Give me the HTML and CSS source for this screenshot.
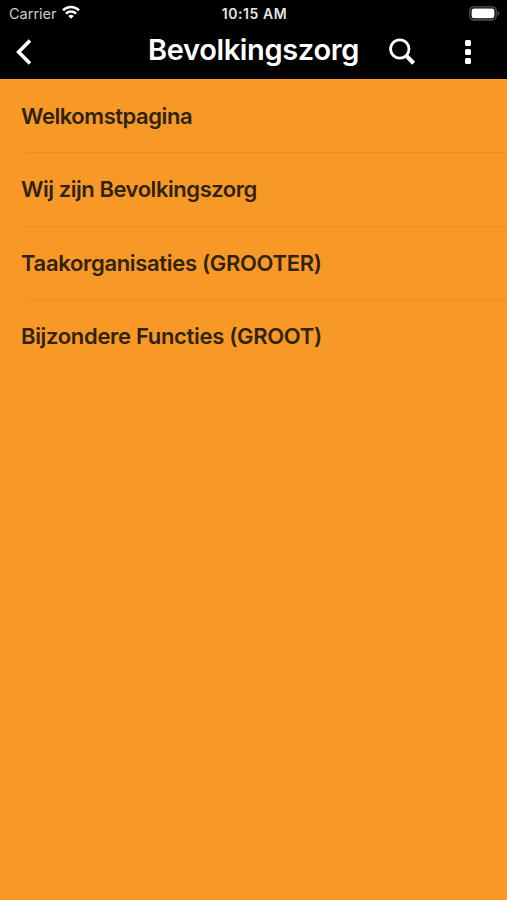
FILE: index.html
```html
<!DOCTYPE html>
<html lang="nl">

<head>
    <meta charset="UTF-8">
    <meta name="viewport" content="width=device-width, initial-scale=1.0">
    <title>Bevolkingszorg</title>
    <link rel="stylesheet" href="styles.css">
</head>

<body>
    <header class="header">
        <!-- Statusbalk -->
        <div class="statusbar">
            <div class="statusbar__left">
                <span class="statusbar__carrier">Carrier</span>
                <svg class="wifi" width="18" height="14" viewBox="0 0 18 14">
                    <g fill="none" stroke="#fff" stroke-width="2.4">
                        <path d="M1 5.3a11.3 11.3 0 0 1 16 0" />
                        <path d="M3.9 8.6a7.2 7.2 0 0 1 10.2 0" />
                    </g>
                    <path d="M9 13.8L6.2 11a4 4 0 0 1 5.6 0z" fill="#fff" />
                </svg>
            </div>
            <span class="statusbar__time">10:15 AM</span>
            <div class="statusbar__right">
                <svg class="battery" width="31" height="15" viewBox="0 0 31 15">
                    <rect x="0.8" y="0.8" width="26.4" height="13.2" rx="4" fill="none" stroke="#555" stroke-width="1.3" />
                    <rect x="2.6" y="2.6" width="22.8" height="9.6" rx="2.2" fill="#fff" />
                    <path d="M28.6 5.2c2.2.9 2.2 3.5 0 4.4z" fill="#555" />
                </svg>
            </div>
        </div>

        <!-- Navigatie -->
        <nav class="navbar">
            <a class="navbar__back" href="#" aria-label="Terug">
                <svg width="18" height="28" viewBox="0 0 18 28">
                    <path d="M15 2.4L3.6 14 15 25.6" fill="none" stroke="#fff" stroke-width="3.6" />
                </svg>
            </a>
            <h1 class="navbar__title">Bevolkingszorg</h1>
            <a class="navbar__search" href="#" aria-label="Zoeken">
                <svg width="28" height="28" viewBox="0 0 28 28">
                    <circle cx="10.8" cy="11" r="9.2" fill="none" stroke="#fff" stroke-width="2.8" />
                    <path d="M17 17.4L24.6 25.2" stroke="#fff" stroke-width="4.2" />
                </svg>
            </a>
            <a class="navbar__more" href="#" aria-label="Meer">
                <span class="dot"></span>
                <span class="dot"></span>
                <span class="dot"></span>
            </a>
        </nav>
    </header>

    <!-- Menu -->
    <main>
        <ul class="menu">
            <li class="menu__item"><span class="menu__label menu__label--tight">Welkomstpagina</span></li>
            <li class="menu__item"><span class="menu__label menu__label--tight">Wij zijn Bevolkingszorg</span></li>
            <li class="menu__item"><span class="menu__label">Taakorganisaties (GROOTER)</span></li>
            <li class="menu__item"><span class="menu__label">Bijzondere Functies (GROOT)</span></li>
        </ul>
    </main>
</body>

</html>
```
FILE: styles.css
```css
/* Algemene stijlen */
* {
    box-sizing: border-box;
}

body {
    margin: 0;
    min-height: 100vh;
    background: #f89927;
    color: #30230f;
    font-family: Inter, "Liberation Sans", sans-serif;
}

a {
    color: inherit;
    text-decoration: none;
}

svg {
    display: block;
}

.header {
    height: 79px;
    background: #000;
    color: #fff;
}

/* Statusbalk */
.statusbar {
    display: grid;
    grid-template-columns: 1fr auto 1fr;
    align-items: center;
    height: 27px;
    padding: 0 7px 0 9px;
}

.statusbar__left {
    display: flex;
    align-items: center;
    gap: 5px;
}

.statusbar__carrier {
    color: #ccc;
    font-size: 14.5px;
}

.statusbar__time {
    color: #e4e4e4;
    font-size: 14px;
    font-weight: 600;
    letter-spacing: 0.55px;
}

.statusbar__right {
    display: flex;
    justify-content: flex-end;
}

.wifi {
    margin-bottom: 3px;
}

/* Navigatie */
.navbar {
    display: grid;
    grid-template-columns: 148px 241px 66px 1fr;
    align-items: center;
    height: 50px;
}

.navbar__back {
    padding-left: 15px;
}

.navbar__title {
    margin: 0;
    padding-bottom: 6px;
    font-size: 29px;
    font-weight: 600;
    letter-spacing: -0.35px;
    white-space: nowrap;
}

.navbar__more {
    display: flex;
    flex-direction: column;
    align-items: flex-start;
    gap: 3px;
    padding-left: 10px;
}

.dot {
    width: 6px;
    height: 6px;
    border-radius: 1.5px;
    background: #fff;
}

/* Menu */
.menu {
    margin: 0;
    padding: 1px 0 0 25px;
    list-style: none;
}

.menu__item {
    display: flex;
    align-items: center;
    height: 73.3px;
    border-bottom: 1px solid #ec8f27;
}

.menu__item:last-child {
    border-bottom-color: transparent;
}

.menu__label {
    margin-left: -4px;
    font-size: 22px;
    font-weight: 600;
    letter-spacing: -0.32px;
    white-space: nowrap;
}

.menu__label--tight {
    letter-spacing: -0.45px;
}
```
